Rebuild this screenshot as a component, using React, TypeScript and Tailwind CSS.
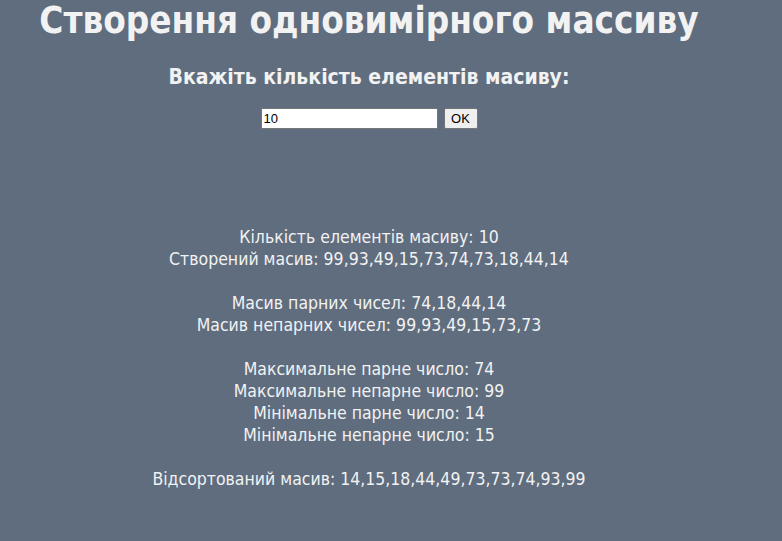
export default function App() {
  const lines: (string | null)[] = [
    "Кількість елементів масиву: 10",
    "Створений масив: 99,93,49,15,73,74,73,18,44,14",
    null,
    "Масив парних чисел: 74,18,44,14",
    "Масив непарних чисел: 99,93,49,15,73,73",
    null,
    "Максимальне парне число: 74",
    "Максимальне непарне число: 99",
    "Мінімальне парне число: 14",
    "Мінімальне непарне число: 15",
    null,
    "Відсортований масив: 14,15,18,44,49,73,73,74,93,99",
  ];

  return (
    <div
      className="min-h-[541px] w-full bg-[#5f6d7e] text-[#f2f2f2]"
      style={{ fontFamily: '"DejaVu Sans Condensed", "DejaVu Sans", sans-serif' }}
    >
      <div className="w-[738px] text-center">
        <h1 className="pt-[1px] text-[36.5px] font-bold leading-[40px]">
          Створення одновимірного массиву
        </h1>
        <h2 className="mt-[23px] text-[21px] font-bold leading-[26px]">
          Вкажіть кількість елементів масиву:
        </h2>
        <div className="mt-[18px] flex items-center justify-center gap-[6px]">
          <input
            defaultValue="10"
            className="h-[21px] w-[177px] border border-[#767676] bg-white px-[2px] text-[13px] text-black outline-none"
            style={{ fontFamily: '"Liberation Sans", Arial, sans-serif' }}
          />
          <button
            className="h-[21px] w-[34px] rounded-[2px] border border-[#767676] bg-[#efefef] text-[13px] leading-none text-black"
            style={{ fontFamily: '"Liberation Sans", Arial, sans-serif' }}
          >
            OK
          </button>
        </div>
        <div className="mt-[97px] text-[17.5px] leading-[22px]">
          {lines.map((l, i) =>
            l === null ? <div key={i} className="h-[22px]" /> : <div key={i}>{l}</div>
          )}
        </div>
      </div>
    </div>
  );
}
